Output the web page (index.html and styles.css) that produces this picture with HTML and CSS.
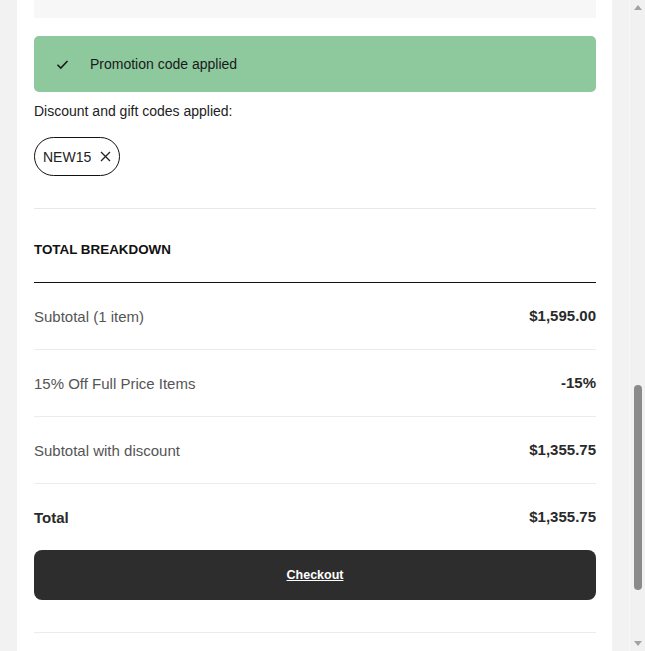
FILE: index.html
```html
<!DOCTYPE html>
<html lang="en">
<head>
    <meta charset="UTF-8">
    <meta name="viewport" content="width=device-width, initial-scale=1.0">
    <title>Cart Summary</title>
    <link rel="stylesheet" href="styles.css">
</head>
<body>
    <div class="page">
        <div class="panel">
            <div class="promo-input"></div>

            <div class="alert">
                <svg class="alert-icon" width="13" height="13" viewBox="0 0 13 13">
                    <path d="M1.5 6.8 L4.8 10 L11.5 3" fill="none" stroke="#1a1a1a" stroke-width="1.6"/>
                </svg>
                <span>Promotion code applied</span>
            </div>

            <p class="codes-label">Discount and gift codes applied:</p>
            <div class="codes">
                <span class="code-pill">
                    NEW15
                    <svg width="11" height="11" viewBox="0 0 11 11">
                        <path d="M1 1 L10 10 M10 1 L1 10" stroke="#222" stroke-width="1.3"/>
                    </svg>
                </span>
            </div>

            <div class="breakdown">
                <h2>TOTAL BREAKDOWN</h2>
                <div class="rows">
                    <div class="row">
                        <span class="label">Subtotal (1 item)</span>
                        <span class="value">$1,595.00</span>
                    </div>
                    <div class="row">
                        <span class="label">15% Off Full Price Items</span>
                        <span class="value">-15%</span>
                    </div>
                    <div class="row">
                        <span class="label">Subtotal with discount</span>
                        <span class="value">$1,355.75</span>
                    </div>
                    <div class="row total">
                        <span class="label">Total</span>
                        <span class="value">$1,355.75</span>
                    </div>
                </div>
                <button class="checkout" type="button">Checkout</button>
            </div>
            <div class="footer-rule"></div>
        </div>
    </div>

    <div class="scrollbar">
        <span class="arrow up"></span>
        <div class="track">
            <div class="thumb"></div>
        </div>
        <span class="arrow down"></span>
    </div>
</body>
</html>
```

FILE: styles.css
```css
* {
    margin: 0;
    padding: 0;
    box-sizing: border-box;
    font-family: 'Liberation Sans', Arial, sans-serif;
}

body {
    display: flex;
    height: 651px;
    overflow: hidden;
    background-color: #f2f2f2;
    color: #222222;
}

.page {
    flex: 1;
    padding: 0 17px;
}

.panel {
    background: #ffffff;
    height: 100%;
    padding: 0 16px 0 17px;
}

.promo-input {
    height: 18px;
    background: #f7f7f7;
}

.alert {
    display: flex;
    align-items: center;
    gap: 21px;
    height: 56px;
    margin-top: 18px;
    padding-left: 22px;
    background: #8dc99d;
    border-radius: 5px;
    font-family: 'Roboto', sans-serif;
    font-size: 14px;
    color: #1a1a1a;
}

.codes-label {
    margin-top: 9px;
    font-size: 14px;
    line-height: 20px;
    color: #222222;
}

.codes {
    display: flex;
    margin-top: 16px;
}

.code-pill {
    display: inline-flex;
    align-items: center;
    gap: 9px;
    height: 39px;
    padding: 0 8px;
    border: 1px solid #111111;
    border-radius: 20px;
    font-size: 14px;
    color: #222222;
}

.breakdown {
    margin-top: 32px;
    border-top: 1px solid #e8e8e8;
}

.breakdown h2 {
    padding-top: 31px;
    padding-bottom: 22px;
    font-size: 13.4px;
    line-height: 20px;
    font-weight: bold;
    color: #111111;
    border-bottom: 1px solid #111111;
}

.row {
    display: flex;
    justify-content: space-between;
    align-items: center;
    height: 67px;
    border-bottom: 1px solid #ececec;
    font-size: 15px;
}

.row .label {
    color: #555555;
}

.row .value {
    font-weight: bold;
    color: #2a2a2a;
    margin-top: -2px;
}

.row.total {
    height: 66px;
    border-bottom: none;
}

.row.total .label {
    font-weight: bold;
    color: #2a2a2a;
}

.checkout {
    width: 100%;
    height: 50px;
    border: none;
    border-radius: 8px;
    background: #2d2d2d;
    color: #ffffff;
    font-size: 12.5px;
    font-weight: bold;
    text-decoration: underline;
    cursor: pointer;
}

.footer-rule {
    margin-top: 32px;
    border-top: 1px solid #ececec;
}

.scrollbar {
    width: 16px;
    display: flex;
    flex-direction: column;
    align-items: center;
    background: #f1f1f1;
    border-left: 1px solid #f7f7f7;
}

.arrow {
    width: 0;
    height: 0;
    margin: 5px 0;
    border-left: 4px solid transparent;
    border-right: 4px solid transparent;
}

.arrow.up {
    border-bottom: 5px solid #a3a3a3;
}

.arrow.down {
    border-top: 5px solid #a3a3a3;
}

.track {
    flex: 1;
    display: flex;
    flex-direction: column;
    justify-content: flex-end;
    padding-bottom: 46px;
}

.thumb {
    width: 8px;
    height: 205px;
    background: #8a8a8a;
    border-radius: 4px;
}
```
